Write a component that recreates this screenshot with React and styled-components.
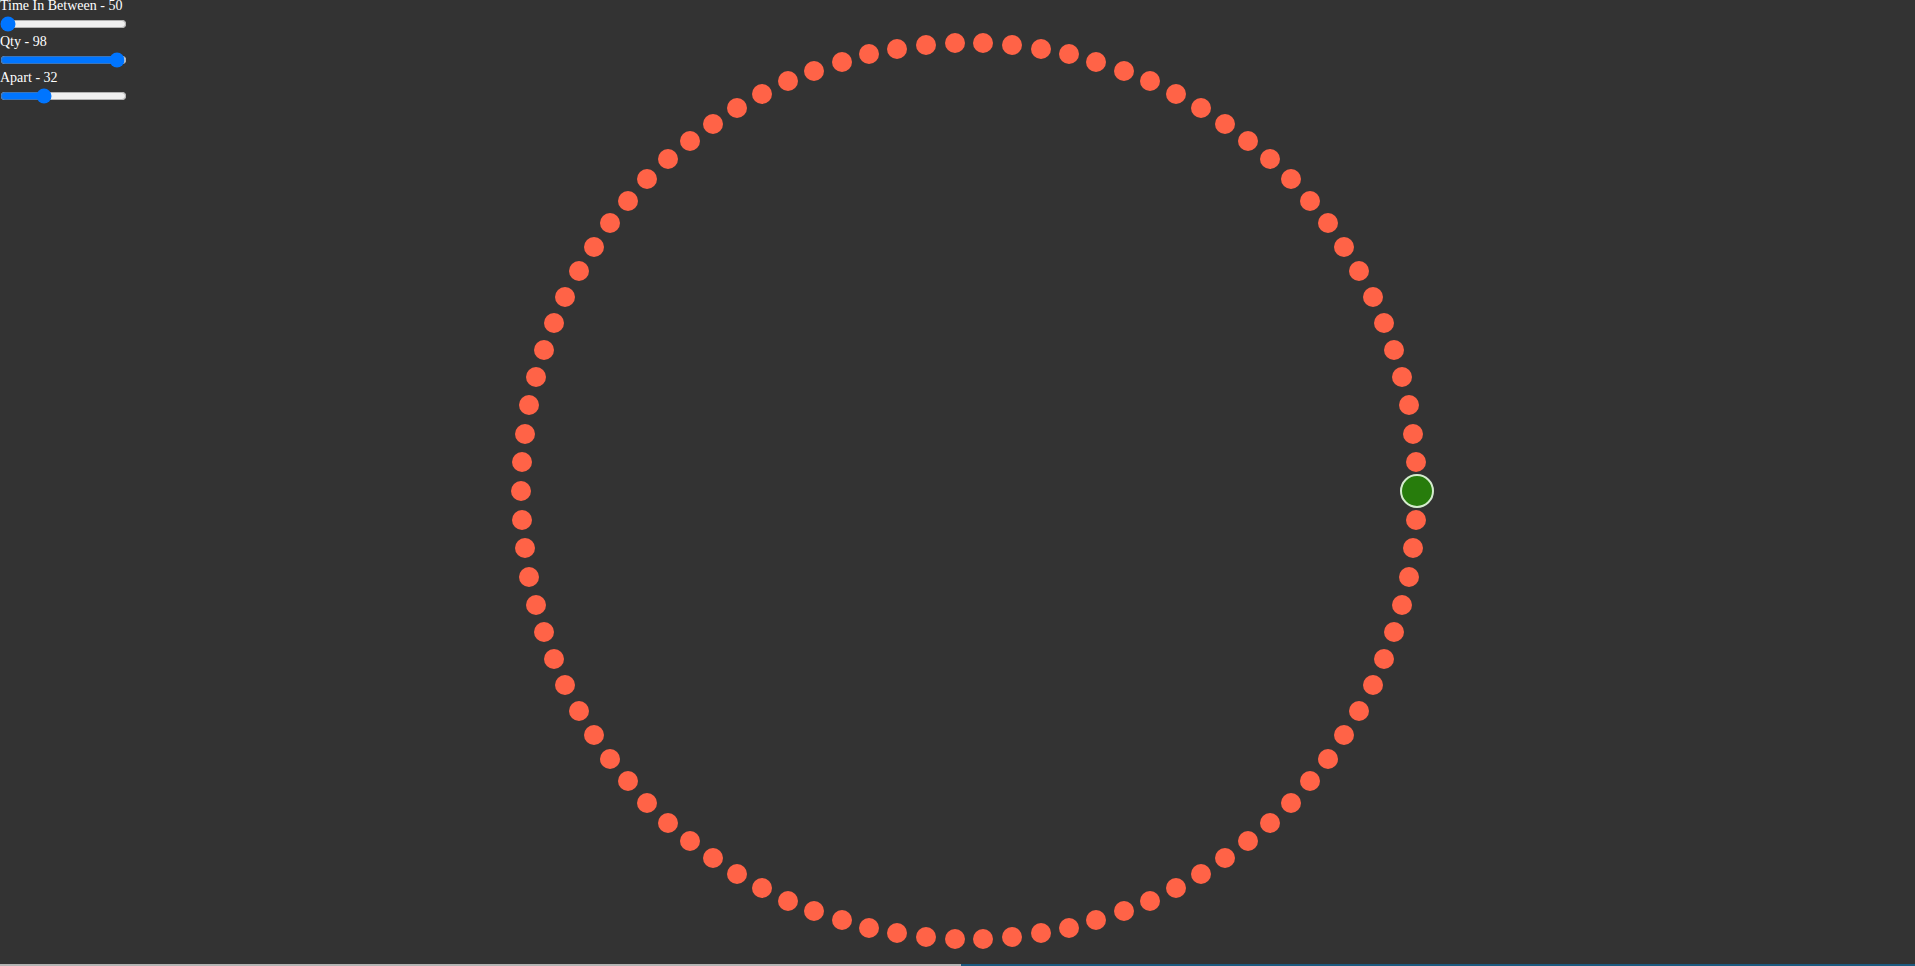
import React, { useState } from 'react'
import styled, { createGlobalStyle } from 'styled-components';

const GlobalStyle = createGlobalStyle`
    html, body {
        margin: 0;
        padding: 0;
        background-color: #333333;
        overflow: hidden;
    }

    body {
        font-family: "Liberation Serif", "Times New Roman", serif;
        font-size: 14px;
        color: #ffffff;
    }
`;

const Page = styled.div`
    display: flex;
    flex-direction: column;
    width: 100vw;
    height: 100vh;
`;

const Stage = styled.main`
    position: relative;
    flex: 1;
    overflow: hidden;
`;

const Controls = styled.form`
    position: relative;
    z-index: 1;

    display: flex;
    flex-direction: column;
    width: 127px;
    margin-top: -2px;
`;

const Label = styled.label`
    display: block;
    line-height: 16px;
    white-space: nowrap;
`;

const Slider = styled.input`
    display: block;
    width: 127px;
    height: 16px;
    margin: 2px 0;
    accent-color: #0075ff;
`;

const Ring = styled.div`
    position: absolute;
    inset: 0;
`;

const Dot = styled.span`
    position: absolute;

    width: ${({ $active }) => ($active ? '30px' : '20px')};
    aspect-ratio: 1;

    background-color: ${({ $active }) => ($active ? '#277c0c' : '#ff6347')};
    border: ${({ $active }) => ($active ? '2px solid #d4ecce' : 'none')};
    border-radius: 50%;

    transform: translate(-50%, -50%);
`;

const BottomBar = styled.footer`
    display: grid;
    grid-template-columns: 961px 1fr;
    height: 2px;
`;

const BarPart = styled.div`
    background-color: ${({ $tone }) => ($tone === 'blue' ? '#1b5a80' : '#b4b4b4')};
`;

const CENTER_X = 969;
const CENTER_Y = 491;

const Control = ({ title, value, min, max, onChange }) => (
    <>
        <Label>{title} - {value}</Label>
        <Slider
            type="range"
            min={min}
            max={max}
            value={value}
            onChange={e => onChange(Number(e.target.value))}
        />
    </>
)

const App = () => {
    const [between, setBetween] = useState(50);
    const [qty, setQty] = useState(98);
    const [apart, setApart] = useState(32);

    // ring radius stays fixed, dots spread evenly around it
    const radius = 448;
    const dots = Array.from({ length: qty }, (_, i) => {
        const angle = (i / qty) * Math.PI * 2;
        return {
            x: CENTER_X + Math.cos(angle) * radius,
            y: CENTER_Y + Math.sin(angle) * radius,
        };
    });

    return (
        <>
            <GlobalStyle />
            <Page>
                <Stage>
                    <Controls onSubmit={e => e.preventDefault()}>
                        <Control title="Time In Between" value={between} min={50} max={1000} onChange={setBetween} />
                        <Control title="Qty" value={qty} min={1} max={100} onChange={setQty} />
                        <Control title="Apart" value={apart} min={0} max={100} onChange={setApart} />
                    </Controls>
                    <Ring>
                        {dots.map((dot, i) => (
                            <Dot key={i} $active={i === 0} style={{ left: dot.x, top: dot.y }} />
                        ))}
                    </Ring>
                </Stage>
                <BottomBar>
                    <BarPart />
                    <BarPart $tone="blue" />
                </BottomBar>
            </Page>
        </>
    )
}

export default App
